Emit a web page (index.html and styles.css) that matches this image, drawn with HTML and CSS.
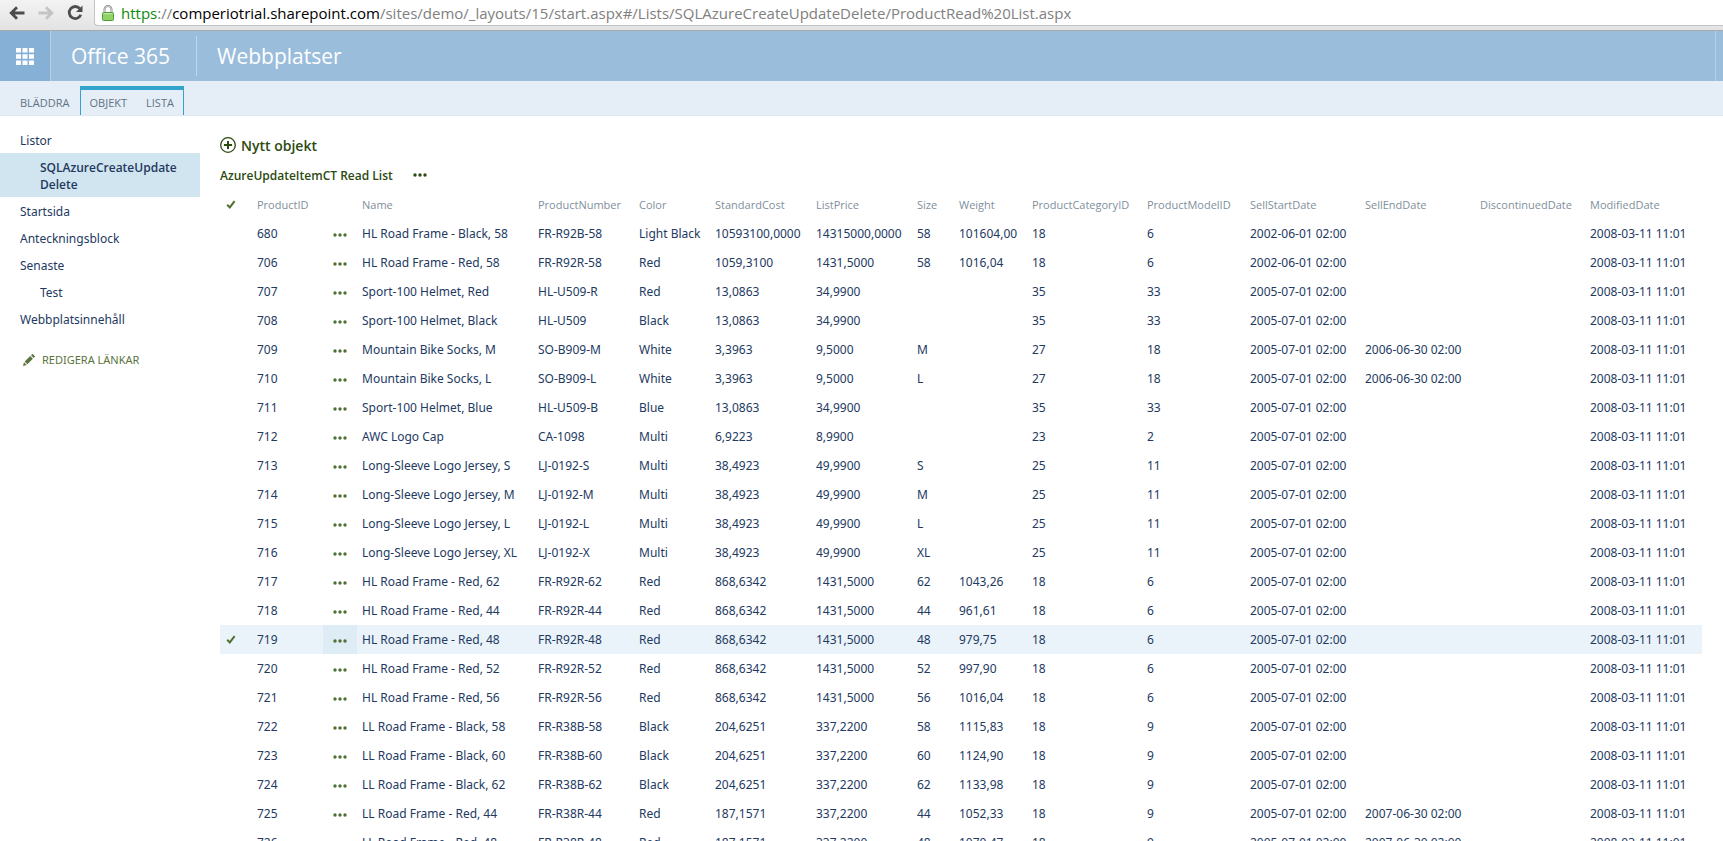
FILE: index.html
```html
<!DOCTYPE html>
<html lang="sv">
<head>
    <title>AzureUpdateItemCT Read List</title>
    <meta charset="UTF-8">
    <meta name="viewport" content="width=device-width">
    <link rel="stylesheet" href="styles.css">
</head>
<body>

<svg class="symbols">
    <symbol id="dots" viewBox="0 0 14 4"><circle cx="2" cy="2" r="1.7"/><circle cx="7" cy="2" r="1.7"/><circle cx="12" cy="2" r="1.7"/></symbol>
    <symbol id="check" viewBox="0 0 10 9"><path d="M1.2 4.8 3.8 7.4 8.6 1.2" fill="none" stroke="currentColor" stroke-width="2"/></symbol>
</svg>

<div class="toolbar">
    <div class="nav-buttons">
        <button type="button" class="tool" aria-label="Back">
            <svg width="16" height="14" viewBox="0 0 16 14"><path d="M15.500 7H2.500M8 1.200 2.200 7 8 12.800" fill="none" stroke="#4d4d4d" stroke-width="2.800"/></svg>
        </button>
        <button type="button" class="tool" aria-label="Forward" disabled>
            <svg width="16" height="14" viewBox="0 0 16 14"><path d="M.5 7h13M8 1.200 13.800 7 8 12.800" fill="none" stroke="#c4c4c4" stroke-width="2.800"/></svg>
        </button>
        <button type="button" class="tool" aria-label="Reload">
            <svg width="16" height="16" viewBox="0 0 16 16"><path d="M12.800 3.600A6 6 0 1 0 13.800 9.800" fill="none" stroke="#4d4d4d" stroke-width="2.800"/><path d="M15.500.5V7H9z" fill="#4d4d4d"/></svg>
        </button>
    </div>
    <div class="address">
        <svg width="12" height="16" viewBox="0 0 12 16">
            <path d="M2.500 8V4.500a3.500 3.500 0 0 1 7 0V8" fill="none" stroke="#8a8a8a" stroke-width="2"/>
            <path d="M2.500 8V4.500a3.500 3.500 0 0 1 7 0V8" fill="none" stroke="#e6e6e6" stroke-width=".7"/>
            <rect x=".5" y="7.500" width="11" height="8" rx="1" fill="#8fd368" stroke="#4f9a36"/>
            <path d="M1.500 8.700h9" stroke="#c6edb0"/>
        </svg>
        <div class="url" role="textbox" aria-label="Address" contenteditable="true" spellcheck="false"><span class="secure">https</span>://<span class="host">comperiotrial.sharepoint.com</span>/sites/demo/_layouts/15/start.aspx#/Lists/SQLAzureCreateUpdateDelete/ProductRead%20List.aspx</div>
    </div>
</div>

<header class="suite">
    <button type="button" class="waffle" aria-label="Apps">
        <svg width="18" height="17" viewBox="0 0 18 17" fill="#fff">
            <path d="M0 0h5v4.500H0zM6.500 0h5v4.500h-5zM13 0h5v4.500h-5zM0 6.200h5v4.500H0zM6.500 6.200h5v4.500h-5zM13 6.200h5v4.500h-5zM0 12.500h5V17H0zM6.500 12.500h5V17h-5zM13 12.500h5V17h-5z"/>
        </svg>
    </button>
    <a class="brand" href="#">Office 365</a>
    <a class="site" href="#">Webbplatser</a>
    <div class="suite-end"></div>
</header>

<nav class="ribbon">
    <button type="button" class="tab">BLÄDDRA</button>
    <div class="tab-group">
        <button type="button" class="tab">OBJEKT</button>
        <button type="button" class="tab">LISTA</button>
    </div>
</nav>

<div class="page">
    <nav class="side">
        <a href="#">Listor</a>
        <a href="#" class="sub selected">SQLAzureCreateUpdate<wbr>Delete</a>
        <a href="#">Startsida</a>
        <a href="#">Anteckningsblock</a>
        <a href="#">Senaste</a>
        <a href="#" class="sub">Test</a>
        <a href="#">Webbplatsinnehåll</a>
        <button type="button" class="edit-links">
            <svg width="12" height="12" viewBox="0 0 12 12" fill="currentColor"><path d="M0 12 1 8.300 3.700 11zM1.700 7.600 7.200 2.100 9.900 4.800 4.400 10.300zM8 1.300 9 .3Q9.500-.1 10 .3L11.700 2Q12.100 2.500 11.700 3L10.700 4z"/></svg>
            REDIGERA LÄNKAR
        </button>
    </nav>

    <main class="content">
        <button type="button" class="new-item">
            <svg width="16" height="16" viewBox="0 0 16 16" fill="none" stroke="currentColor"><circle cx="8" cy="8" r="7.300" stroke-width="1.300"/><path d="M8 4v8M4 8h8" stroke-width="2"/></svg>
            Nytt objekt
        </button>
        <div class="view">
            <a href="#">AzureUpdateItemCT Read List</a>
            <button type="button" class="more" aria-label="More"><svg class="dots"><use href="#dots"/></svg></button>
        </div>

        <table class="list">
            <colgroup>
                <col class="c-check"><col class="c-id"><col class="c-menu"><col class="c-name"><col class="c-cost"><col class="c-color"><col class="c-cost"><col class="c-cost"><col class="c-size"><col class="c-weight"><col class="c-date"><col class="c-model"><col class="c-date"><col class="c-date"><col class="c-disc"><col class="c-mod">
            </colgroup>
            <thead>
                <tr>
                    <th class="check"><svg><use href="#check"/></svg></th>
                    <th>ProductID</th>
                    <th></th>
                    <th>Name</th>
                    <th>ProductNumber</th>
                    <th>Color</th>
                    <th>StandardCost</th>
                    <th>ListPrice</th>
                    <th>Size</th>
                    <th>Weight</th>
                    <th>ProductCategoryID</th>
                    <th>ProductModelID</th>
                    <th>SellStartDate</th>
                    <th>SellEndDate</th>
                    <th>DiscontinuedDate</th>
                    <th>ModifiedDate</th>
                </tr>
            </thead>
            <tbody>
                <tr><td></td><td>680</td><td class="menu"><button type="button" aria-label="Menu"><svg class="dots"><use href="#dots"/></svg></button></td><td>HL Road Frame - Black, 58</td><td>FR-R92B-58</td><td>Light Black</td><td>10593100,0000</td><td>14315000,0000</td><td>58</td><td>101604,00</td><td>18</td><td>6</td><td>2002-06-01 02:00</td><td></td><td></td><td>2008-03-11 11:01</td></tr>
                <tr><td></td><td>706</td><td class="menu"><button type="button" aria-label="Menu"><svg class="dots"><use href="#dots"/></svg></button></td><td>HL Road Frame - Red, 58</td><td>FR-R92R-58</td><td>Red</td><td>1059,3100</td><td>1431,5000</td><td>58</td><td>1016,04</td><td>18</td><td>6</td><td>2002-06-01 02:00</td><td></td><td></td><td>2008-03-11 11:01</td></tr>
                <tr><td></td><td>707</td><td class="menu"><button type="button" aria-label="Menu"><svg class="dots"><use href="#dots"/></svg></button></td><td>Sport-100 Helmet, Red</td><td>HL-U509-R</td><td>Red</td><td>13,0863</td><td>34,9900</td><td></td><td></td><td>35</td><td>33</td><td>2005-07-01 02:00</td><td></td><td></td><td>2008-03-11 11:01</td></tr>
                <tr><td></td><td>708</td><td class="menu"><button type="button" aria-label="Menu"><svg class="dots"><use href="#dots"/></svg></button></td><td>Sport-100 Helmet, Black</td><td>HL-U509</td><td>Black</td><td>13,0863</td><td>34,9900</td><td></td><td></td><td>35</td><td>33</td><td>2005-07-01 02:00</td><td></td><td></td><td>2008-03-11 11:01</td></tr>
                <tr><td></td><td>709</td><td class="menu"><button type="button" aria-label="Menu"><svg class="dots"><use href="#dots"/></svg></button></td><td>Mountain Bike Socks, M</td><td>SO-B909-M</td><td>White</td><td>3,3963</td><td>9,5000</td><td>M</td><td></td><td>27</td><td>18</td><td>2005-07-01 02:00</td><td>2006-06-30 02:00</td><td></td><td>2008-03-11 11:01</td></tr>
                <tr><td></td><td>710</td><td class="menu"><button type="button" aria-label="Menu"><svg class="dots"><use href="#dots"/></svg></button></td><td>Mountain Bike Socks, L</td><td>SO-B909-L</td><td>White</td><td>3,3963</td><td>9,5000</td><td>L</td><td></td><td>27</td><td>18</td><td>2005-07-01 02:00</td><td>2006-06-30 02:00</td><td></td><td>2008-03-11 11:01</td></tr>
                <tr><td></td><td>711</td><td class="menu"><button type="button" aria-label="Menu"><svg class="dots"><use href="#dots"/></svg></button></td><td>Sport-100 Helmet, Blue</td><td>HL-U509-B</td><td>Blue</td><td>13,0863</td><td>34,9900</td><td></td><td></td><td>35</td><td>33</td><td>2005-07-01 02:00</td><td></td><td></td><td>2008-03-11 11:01</td></tr>
                <tr><td></td><td>712</td><td class="menu"><button type="button" aria-label="Menu"><svg class="dots"><use href="#dots"/></svg></button></td><td>AWC Logo Cap</td><td>CA-1098</td><td>Multi</td><td>6,9223</td><td>8,9900</td><td></td><td></td><td>23</td><td>2</td><td>2005-07-01 02:00</td><td></td><td></td><td>2008-03-11 11:01</td></tr>
                <tr><td></td><td>713</td><td class="menu"><button type="button" aria-label="Menu"><svg class="dots"><use href="#dots"/></svg></button></td><td>Long-Sleeve Logo Jersey, S</td><td>LJ-0192-S</td><td>Multi</td><td>38,4923</td><td>49,9900</td><td>S</td><td></td><td>25</td><td>11</td><td>2005-07-01 02:00</td><td></td><td></td><td>2008-03-11 11:01</td></tr>
                <tr><td></td><td>714</td><td class="menu"><button type="button" aria-label="Menu"><svg class="dots"><use href="#dots"/></svg></button></td><td>Long-Sleeve Logo Jersey, M</td><td>LJ-0192-M</td><td>Multi</td><td>38,4923</td><td>49,9900</td><td>M</td><td></td><td>25</td><td>11</td><td>2005-07-01 02:00</td><td></td><td></td><td>2008-03-11 11:01</td></tr>
                <tr><td></td><td>715</td><td class="menu"><button type="button" aria-label="Menu"><svg class="dots"><use href="#dots"/></svg></button></td><td>Long-Sleeve Logo Jersey, L</td><td>LJ-0192-L</td><td>Multi</td><td>38,4923</td><td>49,9900</td><td>L</td><td></td><td>25</td><td>11</td><td>2005-07-01 02:00</td><td></td><td></td><td>2008-03-11 11:01</td></tr>
                <tr><td></td><td>716</td><td class="menu"><button type="button" aria-label="Menu"><svg class="dots"><use href="#dots"/></svg></button></td><td>Long-Sleeve Logo Jersey, XL</td><td>LJ-0192-X</td><td>Multi</td><td>38,4923</td><td>49,9900</td><td>XL</td><td></td><td>25</td><td>11</td><td>2005-07-01 02:00</td><td></td><td></td><td>2008-03-11 11:01</td></tr>
                <tr><td></td><td>717</td><td class="menu"><button type="button" aria-label="Menu"><svg class="dots"><use href="#dots"/></svg></button></td><td>HL Road Frame - Red, 62</td><td>FR-R92R-62</td><td>Red</td><td>868,6342</td><td>1431,5000</td><td>62</td><td>1043,26</td><td>18</td><td>6</td><td>2005-07-01 02:00</td><td></td><td></td><td>2008-03-11 11:01</td></tr>
                <tr><td></td><td>718</td><td class="menu"><button type="button" aria-label="Menu"><svg class="dots"><use href="#dots"/></svg></button></td><td>HL Road Frame - Red, 44</td><td>FR-R92R-44</td><td>Red</td><td>868,6342</td><td>1431,5000</td><td>44</td><td>961,61</td><td>18</td><td>6</td><td>2005-07-01 02:00</td><td></td><td></td><td>2008-03-11 11:01</td></tr>
                <tr class="selected"><td class="check"><svg><use href="#check"/></svg></td><td>719</td><td class="menu"><button type="button" aria-label="Menu"><svg class="dots"><use href="#dots"/></svg></button></td><td>HL Road Frame - Red, 48</td><td>FR-R92R-48</td><td>Red</td><td>868,6342</td><td>1431,5000</td><td>48</td><td>979,75</td><td>18</td><td>6</td><td>2005-07-01 02:00</td><td></td><td></td><td>2008-03-11 11:01</td></tr>
                <tr><td></td><td>720</td><td class="menu"><button type="button" aria-label="Menu"><svg class="dots"><use href="#dots"/></svg></button></td><td>HL Road Frame - Red, 52</td><td>FR-R92R-52</td><td>Red</td><td>868,6342</td><td>1431,5000</td><td>52</td><td>997,90</td><td>18</td><td>6</td><td>2005-07-01 02:00</td><td></td><td></td><td>2008-03-11 11:01</td></tr>
                <tr><td></td><td>721</td><td class="menu"><button type="button" aria-label="Menu"><svg class="dots"><use href="#dots"/></svg></button></td><td>HL Road Frame - Red, 56</td><td>FR-R92R-56</td><td>Red</td><td>868,6342</td><td>1431,5000</td><td>56</td><td>1016,04</td><td>18</td><td>6</td><td>2005-07-01 02:00</td><td></td><td></td><td>2008-03-11 11:01</td></tr>
                <tr><td></td><td>722</td><td class="menu"><button type="button" aria-label="Menu"><svg class="dots"><use href="#dots"/></svg></button></td><td>LL Road Frame - Black, 58</td><td>FR-R38B-58</td><td>Black</td><td>204,6251</td><td>337,2200</td><td>58</td><td>1115,83</td><td>18</td><td>9</td><td>2005-07-01 02:00</td><td></td><td></td><td>2008-03-11 11:01</td></tr>
                <tr><td></td><td>723</td><td class="menu"><button type="button" aria-label="Menu"><svg class="dots"><use href="#dots"/></svg></button></td><td>LL Road Frame - Black, 60</td><td>FR-R38B-60</td><td>Black</td><td>204,6251</td><td>337,2200</td><td>60</td><td>1124,90</td><td>18</td><td>9</td><td>2005-07-01 02:00</td><td></td><td></td><td>2008-03-11 11:01</td></tr>
                <tr><td></td><td>724</td><td class="menu"><button type="button" aria-label="Menu"><svg class="dots"><use href="#dots"/></svg></button></td><td>LL Road Frame - Black, 62</td><td>FR-R38B-62</td><td>Black</td><td>204,6251</td><td>337,2200</td><td>62</td><td>1133,98</td><td>18</td><td>9</td><td>2005-07-01 02:00</td><td></td><td></td><td>2008-03-11 11:01</td></tr>
                <tr><td></td><td>725</td><td class="menu"><button type="button" aria-label="Menu"><svg class="dots"><use href="#dots"/></svg></button></td><td>LL Road Frame - Red, 44</td><td>FR-R38R-44</td><td>Red</td><td>187,1571</td><td>337,2200</td><td>44</td><td>1052,33</td><td>18</td><td>9</td><td>2005-07-01 02:00</td><td>2007-06-30 02:00</td><td></td><td>2008-03-11 11:01</td></tr>
                <tr><td></td><td>726</td><td class="menu"><button type="button" aria-label="Menu"><svg class="dots"><use href="#dots"/></svg></button></td><td>LL Road Frame - Red, 48</td><td>FR-R38R-48</td><td>Red</td><td>187,1571</td><td>337,2200</td><td>48</td><td>1070,47</td><td>18</td><td>9</td><td>2005-07-01 02:00</td><td>2007-06-30 02:00</td><td></td><td>2008-03-11 11:01</td></tr>
            </tbody>
        </table>
    </main>
</div>

</body>
</html>
```

FILE: styles.css
```css
*{
    box-sizing: border-box;
}

body{
    margin: 0;
    height: 100vh;
    overflow: hidden;
    font-family: "Segoe UI", "Open Sans", "Noto Sans", sans-serif;
    font-size: 12px;
    color: #23395f;
    background-color: #fff;
}

a{
    color: inherit;
    text-decoration: none;
}

button{
    border: 0;
    padding: 0;
    background: none;
    font: inherit;
    color: inherit;
    cursor: pointer;
}

svg{
    display: block;
    flex: none;
}

.symbols{
    display: none;
}

/* browser toolbar */
.toolbar{
    display: flex;
    height: 31px;
    padding-bottom: 4px;
    background: linear-gradient(#f3f3f3, #e3e3e3);
    border-bottom: 1px solid #a9a9a9;
}

.nav-buttons{
    display: flex;
    width: 94px;
    gap: 13px;
    padding-left: 9px;
}

.address{
    display: flex;
    flex: 1;
    align-items: center;
    gap: 7px;
    padding-left: 7px;
    background-color: #fff;
    border-left: 1px solid #c4c4c4;
    border-bottom: 1px solid #c4c4c4;
    border-bottom-left-radius: 4px;
}

.url{
    font-size: 15px;
    line-height: 24px;
    white-space: nowrap;
    color: #808080;
    outline: none;
}

.secure{
    color: #0b8a0b;
}

.host{
    color: #000;
}

/* suite bar */
.suite{
    display: flex;
    align-items: center;
    height: 50px;
    background-color: #9abddc;
    color: #fff;
    font-size: 21px;
}

.waffle{
    display: flex;
    align-items: center;
    justify-content: center;
    width: 51px;
    height: 50px;
    background-color: #87b0d6;
    border-right: 1px solid #b9d1e7;
}

.brand{
    width: 146px;
    padding-left: 20px;
    line-height: 40px;
    border-right: 1px solid #c0d6ea;
}

.site{
    flex: 1;
    padding-left: 20px;
}

.suite-end{
    width: 8px;
    height: 50px;
    border-left: 1px solid #b4cfe6;
}

/* ribbon */
.ribbon{
    display: flex;
    align-items: flex-end;
    height: 35px;
    padding-left: 20px;
    gap: 10px;
    background-color: #e5eef6;
    border-bottom: 1px solid #e1e9f0;
    font-size: 11px;
    color: #5f7383;
}

.tab-group{
    display: flex;
    gap: 19px;
    padding: 0 9px;
    border: 1px solid #31a3cc;
    border-width: 4px 1px 0;
}

.tab{
    height: 25px;
}

/* left navigation */
.page{
    display: flex;
}

.side{
    width: 200px;
    padding-top: 10px;
    font-family: "Segoe UI", "Noto Sans", sans-serif;
}

.side a{
    display: block;
    padding: 6px 20px 4px;
    line-height: 17px;
}

.side .sub{
    padding-left: 40px;
}

.side .selected{
    background-color: #d1e5f0;
    font-family: "Segoe UI", "Open Sans", sans-serif;
    font-weight: 600;
}

.edit-links{
    display: flex;
    align-items: center;
    gap: 7px;
    padding: 20px 23px;
    font-size: 11px;
    color: #5a7340;
}

/* list */
.content{
    flex: 1;
    min-width: 0;
    padding: 17px 21px 0 20px;
}

.new-item{
    display: flex;
    align-items: center;
    gap: 5px;
    height: 24px;
    font-size: 14px;
    font-weight: 600;
    color: #2b4a0f;
}

.view{
    display: flex;
    align-items: center;
    gap: 20px;
    height: 33px;
    padding-top: 3px;
    font-weight: 600;
    color: #2b4a0f;
}

.dots{
    width: 14px;
    height: 4px;
    fill: currentColor;
}

.list{
    width: 100%;
    table-layout: fixed;
    border-collapse: collapse;
}

.c-check{ width: 32px; }
.c-id{ width: 71px; }
.c-menu{ width: 34px; }
.c-name{ width: 176px; }
.c-cost{ width: 101px; }
.c-color{ width: 76px; }
.c-size{ width: 42px; }
.c-weight{ width: 73px; }
.c-date{ width: 115px; }
.c-model{ width: 103px; }
.c-disc{ width: 110px; }

.list th,
.list td{
    height: 29px;
    padding: 0 0 0 5px;
    text-align: left;
    white-space: nowrap;
    line-height: 17px;
}

.list td{
    font-family: "Segoe UI", "Noto Sans", sans-serif;
}

.list th{
    font-size: 11px;
    font-weight: normal;
    color: #7f8f9c;
}

.list .check{
    padding-left: 6px;
    color: #4f7032;
}

.check svg{
    width: 10px;
    height: 9px;
}

.list .menu{
    padding: 0;
    color: #4f7032;
}

.menu button{
    display: flex;
    align-items: center;
    justify-content: center;
    width: 34px;
    height: 29px;
    padding-top: 3px;
}

.list .selected{
    background-color: #eaf3f9;
}

.selected .menu{
    background-color: #deecf5;
}
```
